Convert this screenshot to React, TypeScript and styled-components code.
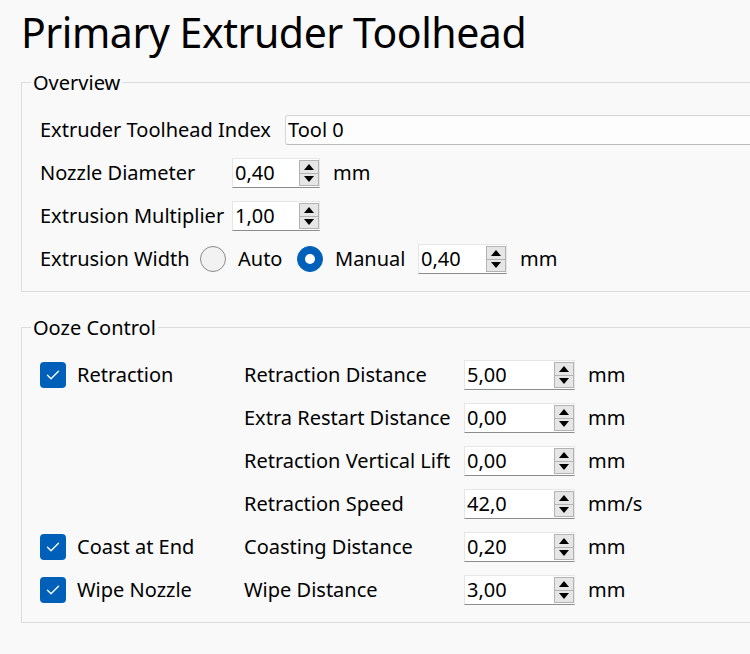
import React from "react";
import styled, { createGlobalStyle } from "styled-components";

const GlobalStyle = createGlobalStyle`
  html, body {
    margin: 0;
    padding: 0;
    background: #f9f9f9;
  }
  body {
    font-family: "Noto Sans", "Open Sans", sans-serif;
    color: #000;
    overflow: hidden;
  }
`;

const Page = styled.div`
  width: 750px;
  height: 654px;
  overflow: hidden;
  padding-left: 21px;
  box-sizing: border-box;
`;

const Title = styled.h1`
  margin: 0 0 10px 0;
  padding-top: 4px;
  font-size: 41px;
  line-height: 56px;
  font-weight: 400;
  letter-spacing: -0.45px;
`;

const Group = styled.fieldset<{ $gapTop?: number }>`
  margin: ${(p) => p.$gapTop ?? 0}px 0 0 0;
  width: 800px;
  box-sizing: border-box;
  border: 1px solid #dcdcdc;
  padding: 21px 0 17px 18px;
  min-width: 0;
`;

const Legend = styled.legend`
  margin-left: -9px;
  padding: 1px 2px 0 2px;
  font-size: 20px;
  line-height: 23px;
`;

const Rows = styled.div`
  display: flex;
  flex-direction: column;
  gap: 13px;
`;

const Row = styled.div`
  display: flex;
  align-items: center;
  height: 30px;
  gap: 13px;
`;

const Label = styled.span<{ $w?: number }>`
  font-size: 20px;
  line-height: 30px;
  white-space: nowrap;
  flex: none;
  width: ${(p) => (p.$w ? `${p.$w}px` : "auto")};
`;

const LineEdit = styled.div`
  flex: 1;
  height: 30px;
  box-sizing: border-box;
  background: #fdfdfd;
  border: 1px solid #d6d6d6;
  border-bottom-color: #bcbcbc;
  border-radius: 3px 0 0 3px;
  padding-left: 2px;
  font-size: 20px;
  line-height: 28px;
`;

const Spin = styled.div<{ $w: number }>`
  display: flex;
  flex: none;
  width: ${(p) => p.$w}px;
  height: 30px;
  box-sizing: border-box;
  background: #ffffff;
  border: 1px solid #e6e6e6;
  border-bottom-color: #8c8c8c;
`;

const SpinValue = styled.span`
  flex: 1;
  padding-left: 2px;
  font-size: 20px;
  line-height: 28px;
`;

const SpinButtons = styled.div`
  display: flex;
  flex-direction: column;
  width: 20px;
  margin: 1px 0 1px 0;
  border: 1px solid #b3b3b3;
  box-sizing: border-box;
  background: #e6e6e6;
`;

const SpinButton = styled.div<{ $down?: boolean }>`
  flex: 1;
  display: flex;
  align-items: center;
  justify-content: center;
  border-top: ${(p) => (p.$down ? "1px solid #b3b3b3" : "none")};
`;

const Arrow = styled.span<{ $down?: boolean }>`
  width: 0;
  height: 0;
  border-left: 5px solid transparent;
  border-right: 5px solid transparent;
  ${(p) =>
    p.$down
      ? "border-top: 6px solid #000;"
      : "border-bottom: 6px solid #000;"}
`;

const Unit = styled.span`
  font-size: 20px;
  line-height: 30px;
  white-space: nowrap;
`;

const RadioOption = styled.label`
  display: flex;
  align-items: center;
  gap: 12px;
  flex: none;
`;

const RadioCircle = styled.span<{ $checked?: boolean }>`
  width: 26px;
  height: 26px;
  box-sizing: border-box;
  border-radius: 50%;
  display: flex;
  align-items: center;
  justify-content: center;
  background: ${(p) => (p.$checked ? "#005fb8" : "#f2f2f2")};
  border: 1px solid ${(p) => (p.$checked ? "#005fb8" : "#8a8a8a")};
`;

const RadioDot = styled.span`
  width: 10px;
  height: 10px;
  border-radius: 50%;
  background: #ffffff;
`;

const OozeGrid = styled.div`
  display: grid;
  grid-template-columns: 191px 207px 111px auto;
  grid-auto-rows: 30px;
  column-gap: 13px;
  row-gap: 13px;
  align-items: center;
`;

const CheckOption = styled.label`
  display: flex;
  align-items: center;
  gap: 11px;
`;

const CheckBox = styled.span`
  width: 26px;
  height: 26px;
  box-sizing: border-box;
  border-radius: 4px;
  background: #005fb8;
  display: flex;
  align-items: center;
  justify-content: center;
  flex: none;
`;

const Empty = styled.span``;

function SpinBox({ value, width }: { value: string; width: number }) {
  return (
    <Spin $w={width}>
      <SpinValue>{value}</SpinValue>
      <SpinButtons>
        <SpinButton>
          <Arrow />
        </SpinButton>
        <SpinButton $down>
          <Arrow $down />
        </SpinButton>
      </SpinButtons>
    </Spin>
  );
}

function Radio({ label, checked, textWidth }: { label: string; checked?: boolean; textWidth: number }) {
  return (
    <RadioOption>
      <RadioCircle $checked={checked}>{checked && <RadioDot />}</RadioCircle>
      <Label $w={textWidth}>{label}</Label>
    </RadioOption>
  );
}

function Check({ label }: { label: string }) {
  return (
    <CheckOption>
      <CheckBox>
        <svg width="26" height="26" viewBox="0 0 26 26">
          <path d="M7.5 13.2 L11 16.7 L18.5 9.2" fill="none" stroke="#ffffff" strokeWidth="1.4" strokeLinecap="round" strokeLinejoin="round" />
        </svg>
      </CheckBox>
      <Label>{label}</Label>
    </CheckOption>
  );
}

const oozeRows: { check?: string; label: string; value: string; unit: string }[] = [
  { check: "Retraction", label: "Retraction Distance", value: "5,00", unit: "mm" },
  { label: "Extra Restart Distance", value: "0,00", unit: "mm" },
  { label: "Retraction Vertical Lift", value: "0,00", unit: "mm" },
  { label: "Retraction Speed", value: "42,0", unit: "mm/s" },
  { check: "Coast at End", label: "Coasting Distance", value: "0,20", unit: "mm" },
  { check: "Wipe Nozzle", label: "Wipe Distance", value: "3,00", unit: "mm" },
];

export default function App() {
  return (
    <>
      <GlobalStyle />
      <Page>
        <Title>Primary Extruder Toolhead</Title>
        <Group>
          <Legend>Overview</Legend>
          <Rows>
            <Row>
              <Label $w={232}>Extruder Toolhead Index</Label>
              <LineEdit>Tool 0</LineEdit>
            </Row>
            <Row>
              <Label $w={179}>Nozzle Diameter</Label>
              <SpinBox value="0,40" width={88} />
              <Unit>mm</Unit>
            </Row>
            <Row>
              <Label $w={179}>Extrusion Multiplier</Label>
              <SpinBox value="1,00" width={88} />
            </Row>
            <Row>
              <Label $w={147}>Extrusion Width</Label>
              <Radio label="Auto" textWidth={46} />
              <Radio label="Manual" checked textWidth={70} />
              <SpinBox value="0,40" width={89} />
              <Unit>mm</Unit>
            </Row>
          </Rows>
        </Group>
        <Group $gapTop={23}>
          <Legend>Ooze Control</Legend>
          <OozeGrid>
            {oozeRows.map((r) => (
              <React.Fragment key={r.label}>
                {r.check ? <Check label={r.check} /> : <Empty />}
                <Label>{r.label}</Label>
                <SpinBox value={r.value} width={111} />
                <Unit>{r.unit}</Unit>
              </React.Fragment>
            ))}
          </OozeGrid>
        </Group>
      </Page>
    </>
  );
}
